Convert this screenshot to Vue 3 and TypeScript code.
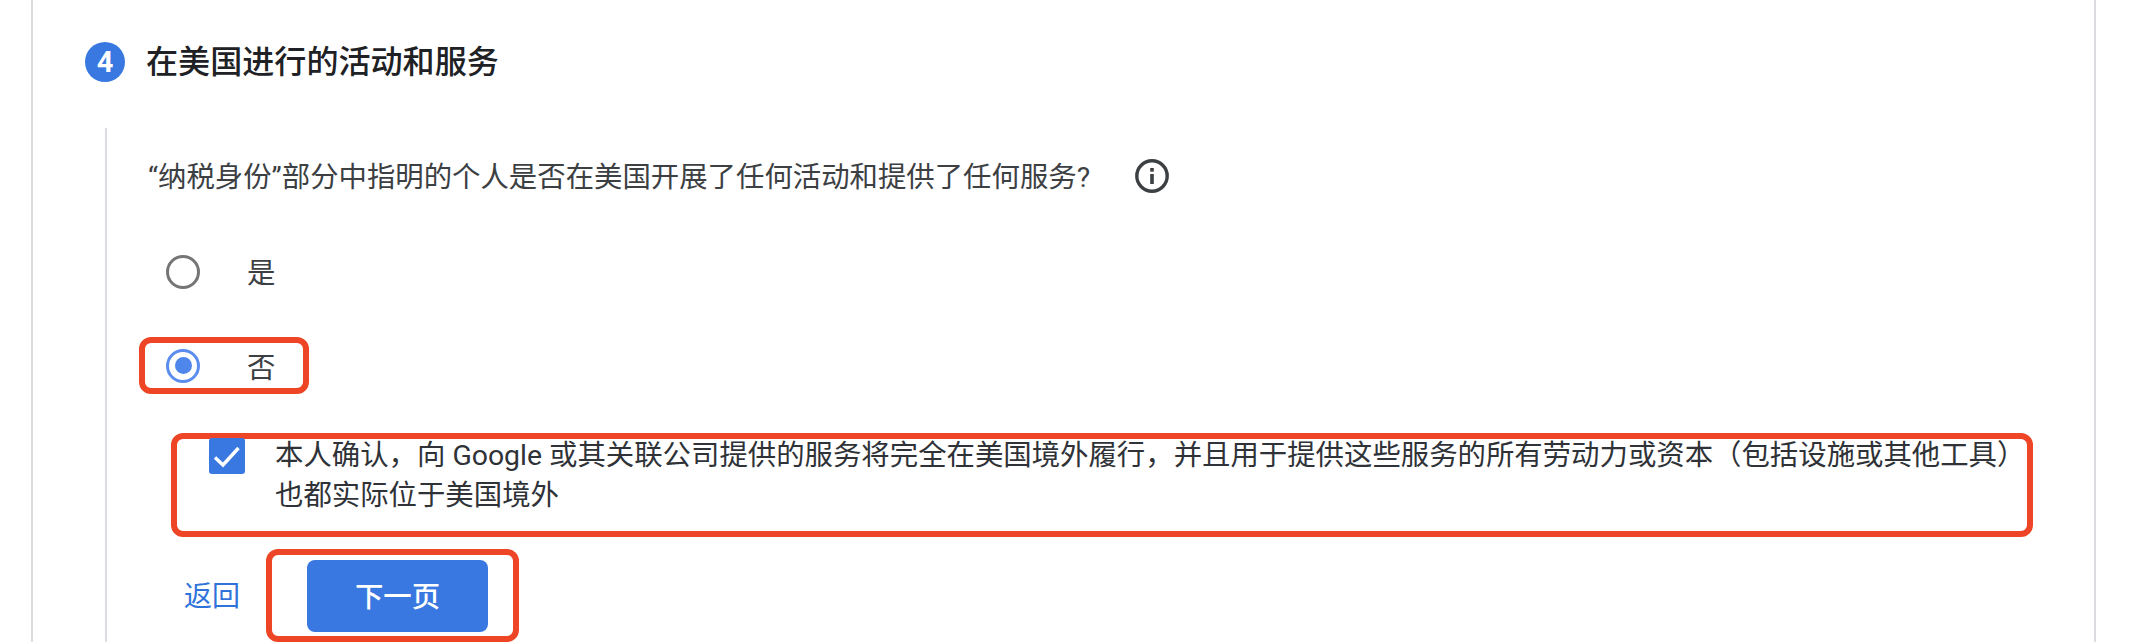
<script setup lang="ts">
const title: string = '在美国进行的活动和服务'
const question: string = '“纳税身份”部分中指明的个人是否在美国开展了任何活动和提供了任何服务?'
const line1: string = '本人确认，向 Google 或其关联公司提供的服务将完全在美国境外履行，并且用于提供这些服务的所有劳动力或资本（包括设施或其他工具）'
const line2: string = '也都实际位于美国境外'
</script>

<template>
  <div class="page" lang="zh-CN">
    <section class="card">
      <header class="head">
        <span class="step">4</span>
        <h2 class="title">{{ title }}</h2>
      </header>
      <div class="body">
        <div class="question">
          <span class="q-text">{{ question }}</span>
          <svg class="info" viewBox="0 0 34 34" width="34" height="34">
            <circle cx="17" cy="17" r="15.2" fill="none" stroke="#3c4043" stroke-width="3.4" />
            <rect x="15.2" y="15" width="3.6" height="10" fill="#3c4043" />
            <rect x="15.2" y="9" width="3.6" height="3.6" fill="#3c4043" />
          </svg>
        </div>
        <div class="option plain">
          <span class="radio"></span>
          <span class="opt-label">是</span>
        </div>
        <div class="option marked">
          <span class="radio on"><span class="dot"></span></span>
          <span class="opt-label">否</span>
        </div>
        <div class="confirm">
          <span class="check">
            <svg viewBox="0 0 36 36" width="36" height="36">
              <path d="M6 19.5 L14 27 L29.5 10" fill="none" stroke="#fff" stroke-width="3.4" />
            </svg>
          </span>
          <div class="confirm-text">
            <div>{{ line1 }}</div>
            <div>{{ line2 }}</div>
          </div>
        </div>
        <div class="actions">
          <a class="back">返回</a>
          <div class="btn-mark">
            <button class="next" type="button">下一页</button>
          </div>
        </div>
      </div>
    </section>
  </div>
</template>

<style scoped>
.page {
  width: 2150px;
  height: 642px;
  overflow: hidden;
  background: #fff;
  font-family: Roboto, "Noto Sans CJK SC", "Liberation Sans", sans-serif;
  color: #3c4043;
}
.card {
  box-sizing: border-box;
  width: 2065px;
  height: 642px;
  margin-left: 31px;
  border-left: 2px solid #dadce0;
  border-right: 2px solid #dadce0;
  padding-top: 42px;
}
.head {
  display: flex;
  align-items: center;
  height: 40px;
  padding-left: 52px;
  gap: 21px;
}
.step {
  width: 40px;
  height: 40px;
  border-radius: 50%;
  background: #3878e0;
  color: #fff;
  display: flex;
  align-items: center;
  justify-content: center;
  font: 700 29px/40px Roboto, sans-serif;
}
.title {
  margin: 0;
  font-size: 32.1px;
  line-height: 40px;
  font-weight: 500;
  color: #202124;
}
.body {
  margin-top: 46px;
  margin-left: 72px;
  height: 514px;
  border-left: 2px solid #dadce0;
}
.question {
  display: flex;
  align-items: center;
  height: 40px;
  padding-top: 27px;
  padding-left: 41px;
  font-size: 28.4px;
  line-height: 40px;
}
.q-text {
  margin-top: 5px;
}
.info {
  margin-left: 45px;
  margin-top: 2px;
  flex: none;
}
.option {
  display: flex;
  align-items: center;
  box-sizing: border-box;
}
.plain {
  margin-top: 57px;
  margin-left: 59px;
  height: 40px;
}
.marked {
  margin-top: 45px;
  margin-left: 32px;
  width: 170px;
  height: 57px;
  border: 6px solid #ef4527;
  border-radius: 12px;
  padding-left: 21px;
}
.radio {
  box-sizing: border-box;
  flex: none;
  width: 34px;
  height: 34px;
  border-radius: 50%;
  border: 3px solid #757575;
  display: flex;
  align-items: center;
  justify-content: center;
}
.radio.on {
  border-color: #5b8def;
}
.dot {
  width: 17px;
  height: 17px;
  border-radius: 50%;
  background: #4f86ec;
}
.opt-label {
  margin-left: 47px;
  font-size: 28.4px;
  line-height: 40px;
  margin-top: 4px;
}
.marked .opt-label {
  margin-top: 7px;
}
.confirm {
  box-sizing: border-box;
  display: flex;
  margin-top: 39px;
  margin-left: 64px;
  width: 1862px;
  height: 104px;
  border: 6px solid #ef4527;
  border-radius: 12px;
  padding-left: 32px;
}
.check {
  flex: none;
  width: 36px;
  height: 36px;
  margin-top: -1px;
  border-radius: 3px;
  background: #3878e0;
}
.check svg {
  display: block;
}
.confirm-text {
  margin-left: 30px;
  margin-top: -3px;
  font-size: 28.4px;
  line-height: 40px;
  color: #2f3237;
  white-space: nowrap;
}
.actions {
  display: flex;
  align-items: center;
  margin-top: 12px;
  margin-left: 77px;
}
.back {
  font-size: 28px;
  line-height: 40px;
  color: #2f73da;
  margin-top: 2px;
}
.btn-mark {
  box-sizing: border-box;
  margin-left: 26px;
  width: 253px;
  height: 93px;
  border: 6px solid #ef4527;
  border-radius: 12px;
  padding: 5px 0 0 35px;
}
.next {
  display: block;
  width: 181px;
  height: 72px;
  border: 0;
  border-radius: 8px;
  padding: 0 0 4px;
  background: #3878e0;
  color: #fff;
  font-family: inherit;
  font-size: 28.4px;
  font-weight: 500;
}
</style>

<style>
html, body {
  margin: 0;
  background: #fff;
}
</style>
